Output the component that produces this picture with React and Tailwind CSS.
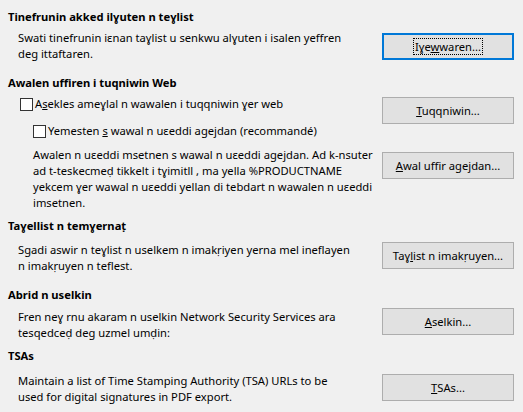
import React from "react";

function Btn({ children, focused }) {
  return (
    <div
      className={
        "w-[132px] h-[27px] shrink-0 flex items-center justify-center bg-[#e1e1e1] " +
        (focused ? "border-2 border-[#0078d7]" : "border border-[#adadad]")
      }
    >
      {focused ? (
        <span className="border border-dotted border-black px-[1px] leading-[15px]">{children}</span>
      ) : (
        <span>{children}</span>
      )}
    </div>
  );
}

function Box() {
  return <span className="w-[13px] h-[13px] shrink-0 bg-white border border-[#333333]" />;
}

export default function App() {
  return (
    <div className="w-[523px] h-[412px] bg-[#f0f0f0] text-black text-[11.2px] leading-[16px] overflow-hidden whitespace-nowrap font-['Noto_Sans','Open_Sans',sans-serif]">
      {/* Section 1 */}
      <div className="font-bold pl-[8px] pt-[9px]">Tinefrunin akked ilɣuten n teɣlist</div>
      <div className="flex items-center mt-[5px] pl-[18px] pr-[9px]">
        <p>
          Swati tinefrunin iɛnan taɣlist u senkwu alɣuten i isalen yeffren
          <br />
          deg ittaftaren.
        </p>
        <div className="ml-auto">
          <Btn focused>
            Iɣe<u>w</u>waren...
          </Btn>
        </div>
      </div>

      {/* Section 2 */}
      <div className="font-bold pl-[8px] mt-[13px]">Awalen uffiren i tuqniwin Web</div>
      <div className="flex mt-[5px] pr-[9px]">
        <div className="flex flex-col pl-[20px]">
          <div className="flex items-center gap-[2px]">
            <Box />
            <span>
              A<u>s</u>ekles ameɣlal n wawalen i tuqqniwin ɣer web
            </span>
          </div>
          <div className="flex items-center gap-[2px] mt-[11px] pl-[13px]">
            <Box />
            <span>
              Yemesten <u>s</u> wawal n uɛeddi agejdan (recommandé)
            </span>
          </div>
          <p className="mt-[8px] pl-[13px]">
            Awalen n uɛeddi msetnen s wawal n uɛeddi agejdan. Ad k-nsuter
            <br />
            ad t-teskecmeḍ tikkelt i tɣimitll , ma yella %PRODUCTNAME
            <br />
            yekcem ɣer wawal n uɛeddi yellan di tebdart n wawalen n uɛeddi
            <br />
            imsetnen.
          </p>
        </div>
        <div className="ml-auto flex flex-col mt-[1px]">
          <Btn>
            <u>T</u>uqqniwin...
          </Btn>
          <div className="mt-[28px]">
            <Btn>
              <u>A</u>wal uffir agejdan...
            </Btn>
          </div>
        </div>
      </div>

      {/* Section 3 */}
      <div className="font-bold pl-[8px] mt-[7px]">Taɣellist n temɣernaṭ</div>
      <div className="flex items-start mt-[8px] pl-[18px] pr-[9px]">
        <p>
          Sgadi aswir n teɣlist n uselkem n imakṛiyen yerna mel ineflayen
          <br />
          n imakṛuyen n teflest.
        </p>
        <div className="ml-auto">
          <Btn>
            Taɣ<u>l</u>ist n imakṛuyen...
          </Btn>
        </div>
      </div>

      {/* Section 4 */}
      <div className="font-bold pl-[8px] mt-[13px]">Abrid n uselkin</div>
      <div className="flex items-start mt-[6px] pl-[18px] pr-[9px]">
        <p>
          Fren neɣ rnu akaram n uselkin Network Security Services ara
          <br />
          tesqedceḍ deg uzmel umḍin:
        </p>
        <div className="ml-auto -mt-px">
          <Btn>
            <u>A</u>selkin...
          </Btn>
        </div>
      </div>

      {/* Section 5 */}
      <div className="font-bold pl-[8px] mt-[7px]">TSAs</div>
      <div className="flex items-start mt-[9px] pl-[18px] pr-[9px]">
        <p>
          Maintain a list of Time Stamping Authority (TSA) URLs to be
          <br />
          used for digital signatures in PDF export.
        </p>
        <div className="ml-auto mt-px">
          <Btn>
            <u>T</u>SAs...
          </Btn>
        </div>
      </div>
    </div>
  );
}
